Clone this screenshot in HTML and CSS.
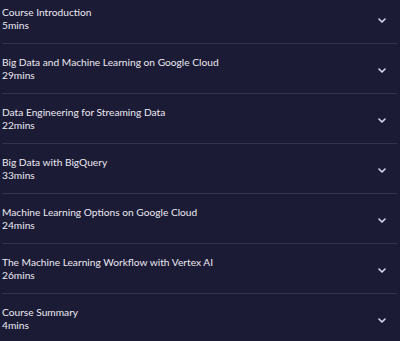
FILE: index.html
```html
<!DOCTYPE html>
<html>
<head>
<meta charset="utf-8">
<link rel="stylesheet" href="styles.css">
</head>
<body>
<ul class="modules">
  <li class="module"><div class="info"><div class="title">Course Introduction</div><div class="dur">5mins</div></div><svg class="chev" viewBox="0 0 8 5"><path d="M1 1l3 3 3-3"/></svg></li>
  <li class="module"><div class="info"><div class="title">Big Data and Machine Learning on Google Cloud</div><div class="dur">29mins</div></div><svg class="chev" viewBox="0 0 8 5"><path d="M1 1l3 3 3-3"/></svg></li>
  <li class="module"><div class="info"><div class="title">Data Engineering for Streaming Data</div><div class="dur">22mins</div></div><svg class="chev" viewBox="0 0 8 5"><path d="M1 1l3 3 3-3"/></svg></li>
  <li class="module"><div class="info"><div class="title">Big Data with BigQuery</div><div class="dur">33mins</div></div><svg class="chev" viewBox="0 0 8 5"><path d="M1 1l3 3 3-3"/></svg></li>
  <li class="module"><div class="info"><div class="title">Machine Learning Options on Google Cloud</div><div class="dur">24mins</div></div><svg class="chev" viewBox="0 0 8 5"><path d="M1 1l3 3 3-3"/></svg></li>
  <li class="module"><div class="info"><div class="title">The Machine Learning Workflow with Vertex AI</div><div class="dur">26mins</div></div><svg class="chev" viewBox="0 0 8 5"><path d="M1 1l3 3 3-3"/></svg></li>
  <li class="module last"><div class="info"><div class="title">Course Summary</div><div class="dur">4mins</div></div><svg class="chev" viewBox="0 0 8 5"><path d="M1 1l3 3 3-3"/></svg></li>
</ul>
</body>
</html>
```

FILE: styles.css
```css
html, body {
  margin: 0;
  padding: 0;
  background: #1c1b35;
  height: 100%;
  overflow: hidden;
}
.modules {
  list-style: none;
  margin: -6px 0 0 0;
  padding: 0 3px 0 2px;
  font-family: Lato, "Open Sans", sans-serif;
  color: #ebe9f2;
}
.module {
  display: flex;
  align-items: center;
  justify-content: space-between;
  height: 49px;
  border-bottom: 1px solid #33324f;
  padding: 0 11px 0 0;
}
.module.last {
  border-bottom: none;
}
.info {
  display: flex;
  flex-direction: column;
}
.title,
.dur {
  font-size: 10.2px;
  line-height: 13px;
}
.chev {
  width: 8px;
  height: 5px;
  margin-top: 4px;
  fill: none;
  stroke: #d9d6ec;
  stroke-width: 1.6;
  stroke-linecap: round;
  stroke-linejoin: round;
}
```
